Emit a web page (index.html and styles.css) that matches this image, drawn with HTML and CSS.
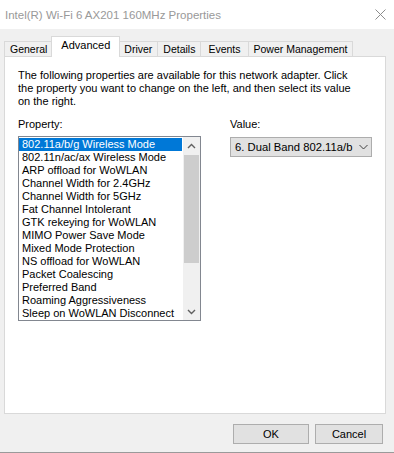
FILE: index.html
```html
<!DOCTYPE html>
<html lang="en">
<head>
    <meta charset="utf-8" />
    <title>Intel(R) Wi-Fi 6 AX201 160MHz Properties</title>
    <link rel="stylesheet" href="styles.css">
</head>
<body>
    <div class="window">
        <div class="titlebar">
            <span class="title">Intel(R) Wi-Fi 6 AX201 160MHz Properties</span>
            <svg class="close" width="11" height="11" viewBox="0 0 11 11">
                <path d="M0.5 0.5L10.5 10.5M10.5 0.5L0.5 10.5" stroke="#8c8c8c" stroke-width="1" fill="none" />
            </svg>
        </div>

        <div class="tabs">
            <div class="tab">General</div>
            <div class="tab active">Advanced</div>
            <div class="tab">Driver</div>
            <div class="tab">Details</div>
            <div class="tab wide">Events</div>
            <div class="tab">Power Management</div>
        </div>

        <div class="panel">
            <p class="intro">The following properties are available for this network adapter. Click<br>the property you want to change on the left, and then select its value<br>on the right.</p>

            <div class="fields">
                <div class="field-left">
                    <div class="label">Property:</div>
                    <div class="listbox">
                        <ul class="items">
                            <li class="selected">802.11a/b/g Wireless Mode</li>
                            <li>802.11n/ac/ax Wireless Mode</li>
                            <li>ARP offload for WoWLAN</li>
                            <li>Channel Width for 2.4GHz</li>
                            <li>Channel Width for 5GHz</li>
                            <li>Fat Channel Intolerant</li>
                            <li>GTK rekeying for WoWLAN</li>
                            <li>MIMO Power Save Mode</li>
                            <li>Mixed Mode Protection</li>
                            <li>NS offload for WoWLAN</li>
                            <li>Packet Coalescing</li>
                            <li>Preferred Band</li>
                            <li>Roaming Aggressiveness</li>
                            <li>Sleep on WoWLAN Disconnect</li>
                        </ul>
                        <div class="scrollbar">
                            <div class="arrow">
                                <svg width="9" height="6" viewBox="0 0 9 6"><polyline points="1,5 4.5,1.5 8,5" stroke="#606060" stroke-width="1.4" fill="none" /></svg>
                            </div>
                            <div class="track"><div class="thumb"></div></div>
                            <div class="arrow">
                                <svg width="9" height="6" viewBox="0 0 9 6"><polyline points="1,1 4.5,4.5 8,1" stroke="#606060" stroke-width="1.4" fill="none" /></svg>
                            </div>
                        </div>
                    </div>
                </div>

                <div class="field-right">
                    <div class="label value-label">Value:</div>
                    <div class="combo">
                        <span>6. Dual Band 802.11a/b</span>
                        <svg width="9" height="6" viewBox="0 0 9 6"><polyline points="0.5,1 4.5,5 8.5,1" stroke="#404040" stroke-width="1" fill="none" /></svg>
                    </div>
                </div>
            </div>
        </div>

        <div class="footer">
            <button class="btn ok">OK</button>
            <button class="btn">Cancel</button>
        </div>
    </div>
</body>
</html>
```

FILE: styles.css
```css
body {
    margin: 0;
    font-family: "Liberation Sans", Arial, sans-serif;
    font-size: 11px;
    color: #000;
}

.window {
    width: 394px;
    height: 453px;
    background: #f0f0f0;
    border-bottom: 1px solid #9a9a9a;
    box-sizing: border-box;
}

.titlebar {
    height: 29px;
    background: #fff;
    display: flex;
    align-items: center;
    justify-content: space-between;
    padding: 0 8px 0 5px;
    box-sizing: border-box;
}

.title {
    font-size: 11.5px;
    color: #999;
}

.tabs {
    height: 27px;
    display: flex;
    align-items: flex-end;
    padding-left: 4px;
}

.tab {
    height: 15px;
    line-height: 14px;
    padding: 0 5px;
    margin-left: -1px;
    font-size: 10.5px;
    background: #f0f0f0;
    border: 1px solid #d9d9d9;
    border-bottom: none;
    box-sizing: border-box;
}

.tab:first-child {
    margin-left: 0;
}

.tab.wide {
    padding: 0 7px;
}

.tab.active {
    position: relative;
    z-index: 1;
    height: 21px;
    line-height: 16px;
    padding: 0 9px 4px;
    margin: 0 -1px -1px -2px;
    font-size: 11px;
    background: #fff;
}

.panel {
    width: 382px;
    height: 358px;
    margin-left: 4px;
    padding: 12px 13px 0;
    background: #fff;
    border: 1px solid #d9d9d9;
    box-sizing: border-box;
}

.intro {
    margin: 0;
    line-height: 13px;
}

.fields {
    display: flex;
    margin-top: 10px;
}

.field-left {
    width: 186px;
}

.field-right {
    margin-left: 29px;
}

.label {
    line-height: 13px;
    margin-bottom: 5px;
}

.value-label {
    margin-bottom: 6px;
}

.listbox {
    display: flex;
    height: 185px;
    border: 1px solid #828790;
    background: #fff;
    box-sizing: border-box;
}

.items {
    flex: 1;
    list-style: none;
    margin: 0;
    padding: 1px 1px 0 0;
}

.items li {
    line-height: 13px;
    padding-left: 3px;
    white-space: nowrap;
}

.items li.selected {
    background: #0078d7;
    color: #fff;
}

.scrollbar {
    width: 17px;
    display: flex;
    flex-direction: column;
    background: #f0f0f0;
}

.arrow {
    height: 17px;
    display: flex;
    align-items: center;
    justify-content: center;
}

.track {
    flex: 1;
}

.thumb {
    height: 108px;
    margin: 1px 1px 0;
    background: #cdcdcd;
}

.combo {
    width: 142px;
    height: 20px;
    display: flex;
    align-items: center;
    justify-content: space-between;
    padding: 0 3px 0 4px;
    font-size: 11.25px;
    background: #e1e1e1;
    border: 1px solid #adadad;
    box-sizing: border-box;
}

.footer {
    display: flex;
    justify-content: flex-end;
    gap: 6px;
    padding: 10px 11px 0 0;
}

.btn {
    width: 68px;
    height: 20px;
    padding: 0;
    font-family: "Liberation Sans", Arial, sans-serif;
    font-size: 11px;
    color: #000;
    background: #e1e1e1;
    border: 1px solid #adadad;
}

.btn.ok {
    width: 76px;
}
```
